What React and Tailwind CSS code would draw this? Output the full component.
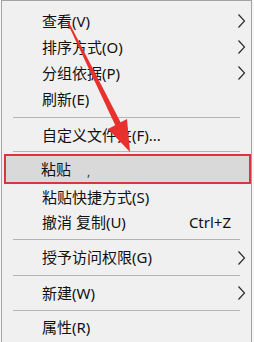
import React from 'react'

const font = { fontFamily: '"Noto Sans", "Noto Sans CJK SC", sans-serif' }

const Chevron = () => (
  <svg width="9" height="15" viewBox="0 0 9 15" className="absolute left-[235px] top-1/2 -translate-y-1/2">
    <polyline points="1.5,1 7.5,7.5 1.5,14" fill="none" stroke="#2e2e2e" strokeWidth="1.2" />
  </svg>
)

const Item = ({ label, h, sub, shortcut }) => (
  <div className={`relative flex items-center pl-[40px] ${h}`}>
    <span className="text-[15px] leading-none text-[#111]">{label}</span>
    {shortcut && (
      <span className="absolute right-[20px] text-[15px] leading-none text-[#111]">{shortcut}</span>
    )}
    {sub && <Chevron />}
  </div>
)

const Sep = ({ h }) => (
  <div className={`flex items-center px-[11px] ${h}`}>
    <div className="h-px w-full bg-[#b4b4b4]" />
  </div>
)

export default function App() {
  return (
    <div className="relative h-[342px] w-[254px] overflow-hidden bg-[#f7f7f7]" style={font}>
      <div className="ml-[1px] h-[360px] w-[251px] border-l border-r border-t border-[#a3a3a3] bg-[#f0f0f0] pt-[7px]">
        <Item label="查看(V)" h="h-[26px]" sub />
        <Item label="排序方式(O)" h="h-[26px]" sub />
        <Item label="分组依据(P)" h="h-[26px]" sub />
        <Item label="刷新(E)" h="h-[26px]" />
        <Sep h="h-[10px]" />
        <Item label="自定义文件夹(F)..." h="h-[26px]" />
        <Sep h="h-[6px]" />
        <div className="ml-[2px] flex h-[30px] items-center border-2 border-[#d8363c] bg-[#d9d9d9] pl-[35px]">
          <span className="text-[15px] leading-none text-[#111]">粘贴</span>
          <span className="ml-[16px] mt-[6px] text-[12px] leading-none text-[#333]">,</span>
        </div>
        <Item label="粘贴快捷方式(S)" h="h-[26px]" />
        <Item label="撤消 复制(U)" h="h-[24px]" shortcut="Ctrl+Z" />
        <Sep h="h-[10px]" />
        <Item label="授予访问权限(G)" h="h-[27px]" sub />
        <Sep h="h-[9px]" />
        <Item label="新建(W)" h="h-[26px]" sub />
        <Sep h="h-[8px]" />
        <Item label="属性(R)" h="h-[27px]" />
      </div>

      {/* red arrow drawn on top */}
      <svg width="254" height="342" className="pointer-events-none absolute left-0 top-0">
        <polygon points="67,22 68.5,21.5 122.5,126 117,129" fill="#e8302c" />
        <polygon points="130,152 127,119 108,129" fill="#e8302c" />
      </svg>
    </div>
  )
}
